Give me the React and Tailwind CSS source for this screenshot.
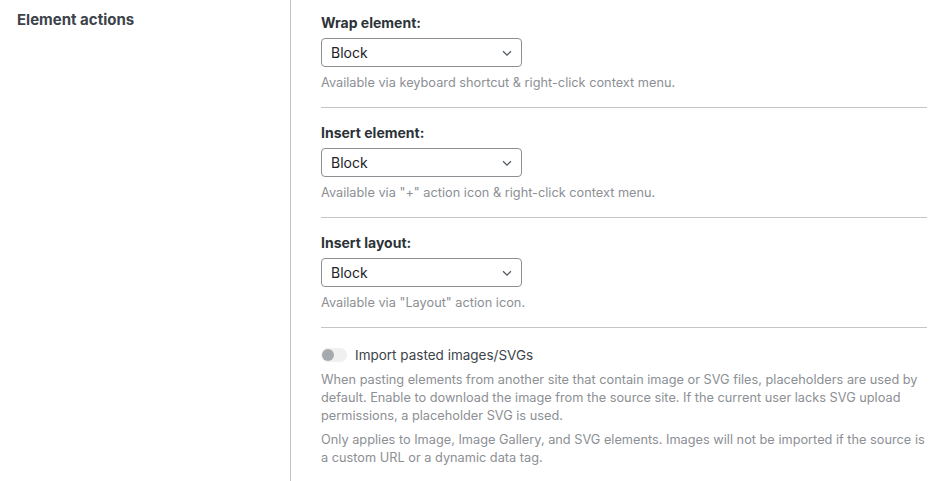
export default function App() {
  const selects = [
    {
      label: "Wrap element:",
      help: "Available via keyboard shortcut & right-click context menu.",
    },
    {
      label: "Insert element:",
      help: 'Available via "+" action icon & right-click context menu.',
    },
    {
      label: "Insert layout:",
      help: 'Available via "Layout" action icon.',
    },
  ];

  return (
    <div className="flex h-[481px] w-[947px] bg-white font-['Inter','Liberation_Sans',sans-serif] text-[#3c434a]">
      {/* Left label column */}
      <div className="w-[291px] shrink-0 border-r border-[#c3c4c7] pl-[17px] pt-[11px]">
        <h3 className="text-[15px] font-bold leading-[18px] text-[#3c434a]">Element actions</h3>
      </div>

      {/* Settings */}
      <div className="w-[636px] pl-[30px] pt-[14px]">
        {selects.map((item) => (
          <div key={item.label} className="border-b border-[#c3c4c7] pb-[15px] mb-[16px]">
            <label className="block text-[14px] font-bold leading-[18px] text-[#2c3338]">{item.label}</label>
            <div className="mt-[6px] flex h-[29px] w-[201px] items-center justify-between rounded-[4px] border border-[#8c8f94] pl-[9px] pr-[7px]">
              <span className="text-[14px] text-[#1d2327]">Block</span>
              <svg width="14" height="14" viewBox="0 0 16 16" fill="none" stroke="#50575e" strokeWidth="1.4">
                <path d="M3.5 6l4.5 4.5L12.5 6" />
              </svg>
            </div>
            <p className="mt-[7px] text-[12.75px] leading-[18px] text-[#8c8f94]">{item.help}</p>
          </div>
        ))}

        <div className="mt-[18px]">
          <div className="flex items-center gap-[8px]">
            <div className="flex h-[14px] w-[26px] items-center rounded-full bg-[#f0f0f1] px-[1px]">
              <div className="h-[12px] w-[12px] rounded-full bg-[#a7aaad]" />
            </div>
            <span className="text-[13.5px] leading-[18px] text-[#3c434a]">Import pasted images/SVGs</span>
          </div>
          <p className="mt-[7px] text-[12.75px] leading-[18px] text-[#8c8f94]">
            When pasting elements from another site that contain image or SVG files, placeholders are used by
            default. Enable to download the image from the source site. If the current user lacks SVG upload
            permissions, a placeholder SVG is used.
          </p>
          <p className="mt-[6px] text-[12.75px] leading-[18px] text-[#8c8f94]">
            Only applies to Image, Image Gallery, and SVG elements. Images will not be imported if the source is
            a custom URL or a dynamic data tag.
          </p>
        </div>
      </div>
    </div>
  );
}
